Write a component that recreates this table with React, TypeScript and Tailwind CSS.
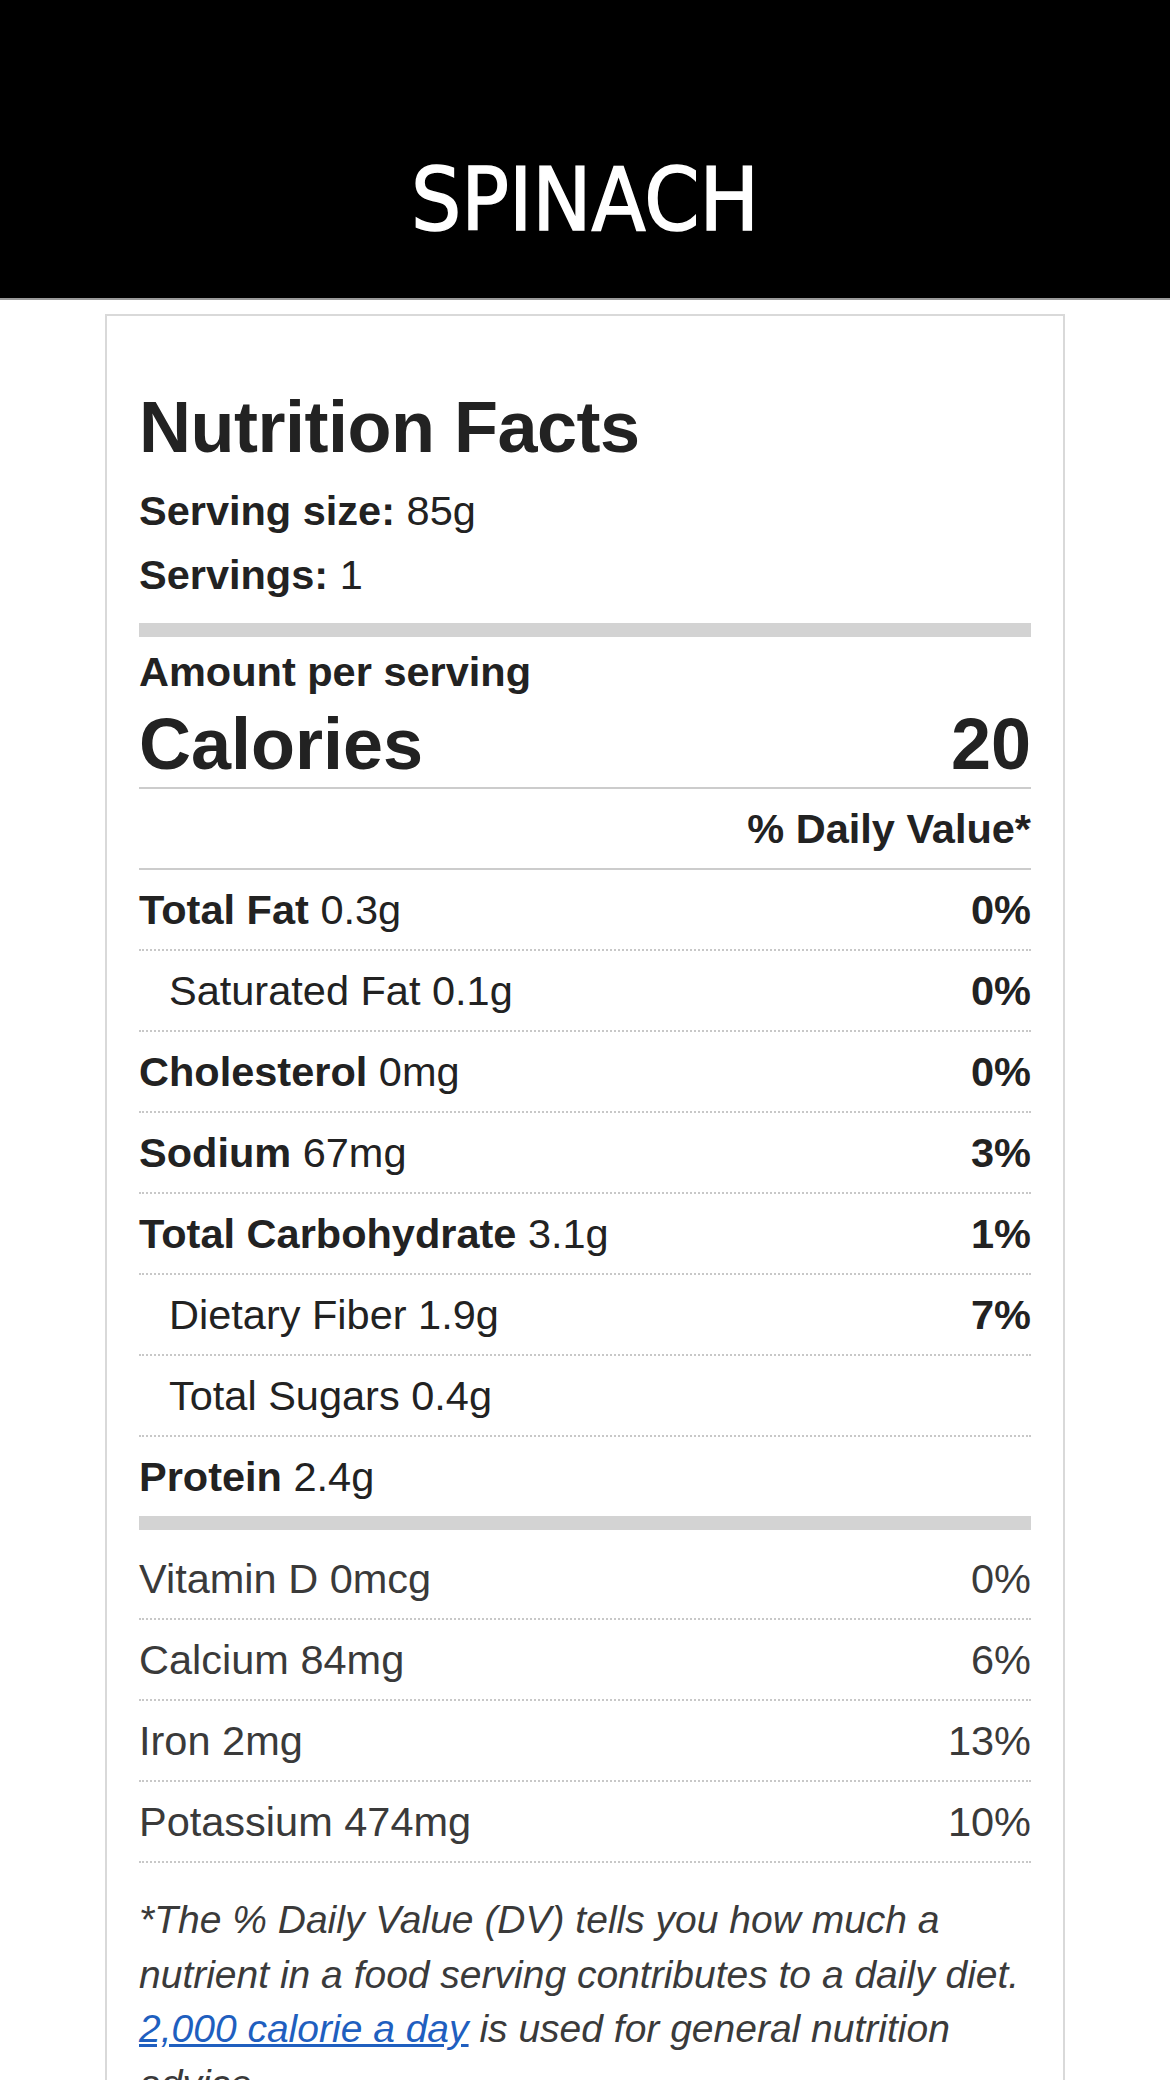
import React from "react";

type Nutrient = {
  label: string;
  amount: string;
  dv?: string;
  indent?: boolean;
};

const nutrients: Nutrient[] = [
  { label: "Total Fat", amount: "0.3g", dv: "0%" },
  { label: "Saturated Fat", amount: "0.1g", dv: "0%", indent: true },
  { label: "Cholesterol", amount: "0mg", dv: "0%" },
  { label: "Sodium", amount: "67mg", dv: "3%" },
  { label: "Total Carbohydrate", amount: "3.1g", dv: "1%" },
  { label: "Dietary Fiber", amount: "1.9g", dv: "7%", indent: true },
  { label: "Total Sugars", amount: "0.4g", indent: true },
];

const vitamins = [
  { label: "Vitamin D", amount: "0mcg", dv: "0%" },
  { label: "Calcium", amount: "84mg", dv: "6%" },
  { label: "Iron", amount: "2mg", dv: "13%" },
  { label: "Potassium", amount: "474mg", dv: "10%" },
];

export default function App() {
  return (
    <main className="min-h-screen bg-white font-['Liberation_Sans',Arial,sans-serif] text-[#222]">
      {/* HEADER */}
      <header className="h-[300px] border-b-2 border-[#9a9a9a] bg-black pt-[156px] text-center">
        <h1 className="font-['DejaVu_Sans_Condensed','DejaVu_Sans',sans-serif] text-[88px] leading-[88px] font-normal font-stretch-condensed text-white [-webkit-text-stroke:1.5px_white]">
          SPINACH
        </h1>
      </header>

      {/* LABEL */}
      <section className="mx-auto mt-[14px] w-[960px] border-2 border-[#d9d9d9] px-[32px] pt-[71px] pb-[40px]">
        <h2 className="text-[72px] leading-[80px] font-bold tracking-[-0.5px]">
          Nutrition Facts
        </h2>
        <div className="mt-[12px] text-[41.5px] leading-[64px]">
          <p>
            <span className="font-bold">Serving size:</span> 85g
          </p>
          <p>
            <span className="font-bold">Servings:</span> 1
          </p>
        </div>

        <div className="mt-[16px] h-[14px] bg-[#d3d3d3]" />

        <p className="pt-[3px] text-[41.5px] leading-[64px] font-bold">
          Amount per serving
        </p>
        <div className="flex items-baseline justify-between border-b-2 border-[#cccccc] pb-[3px] text-[72px] leading-[80px] font-bold">
          <span>Calories</span>
          <span>20</span>
        </div>

        <div className="flex h-[81px] items-center justify-end border-b-2 border-[#cccccc] text-[41.5px] leading-[63px] font-bold">
          % Daily Value*
        </div>

        {nutrients.map((n) => (
          <div
            key={n.label}
            className="flex h-[81px] items-center justify-between border-b-2 border-dotted border-[#c8c8c8] text-[41.5px] leading-[63px]"
          >
            <span className={n.indent ? "pl-[30px]" : ""}>
              {n.indent ? n.label : <span className="font-bold">{n.label}</span>} {n.amount}
            </span>
            {n.dv && <span className="font-bold">{n.dv}</span>}
          </div>
        ))}

        <div className="flex h-[79px] items-center text-[41.5px] leading-[63px]">
          <span>
            <span className="font-bold">Protein</span> 2.4g
          </span>
        </div>

        <div className="h-[14px] bg-[#d3d3d3]" />

        <div className="mt-[9px] text-[#3a3a3a]">
          {vitamins.map((v) => (
            <div
              key={v.label}
              className="flex h-[81px] items-center justify-between border-b-2 border-dotted border-[#c8c8c8] text-[41.5px] leading-[63px]"
            >
              <span>
                {v.label} {v.amount}
              </span>
              <span>{v.dv}</span>
            </div>
          ))}
        </div>

        <p className="mt-[30px] text-[39px] leading-[54.5px] italic text-[#3a3a3a]">
          *The % Daily Value (DV) tells you how much a nutrient in a food serving contributes to a daily diet.{" "}
          <a href="#" className="text-[#1f5fbf] underline">
            2,000 calorie a day
          </a>{" "}
          is used for general nutrition advice.
        </p>
      </section>
    </main>
  );
}
